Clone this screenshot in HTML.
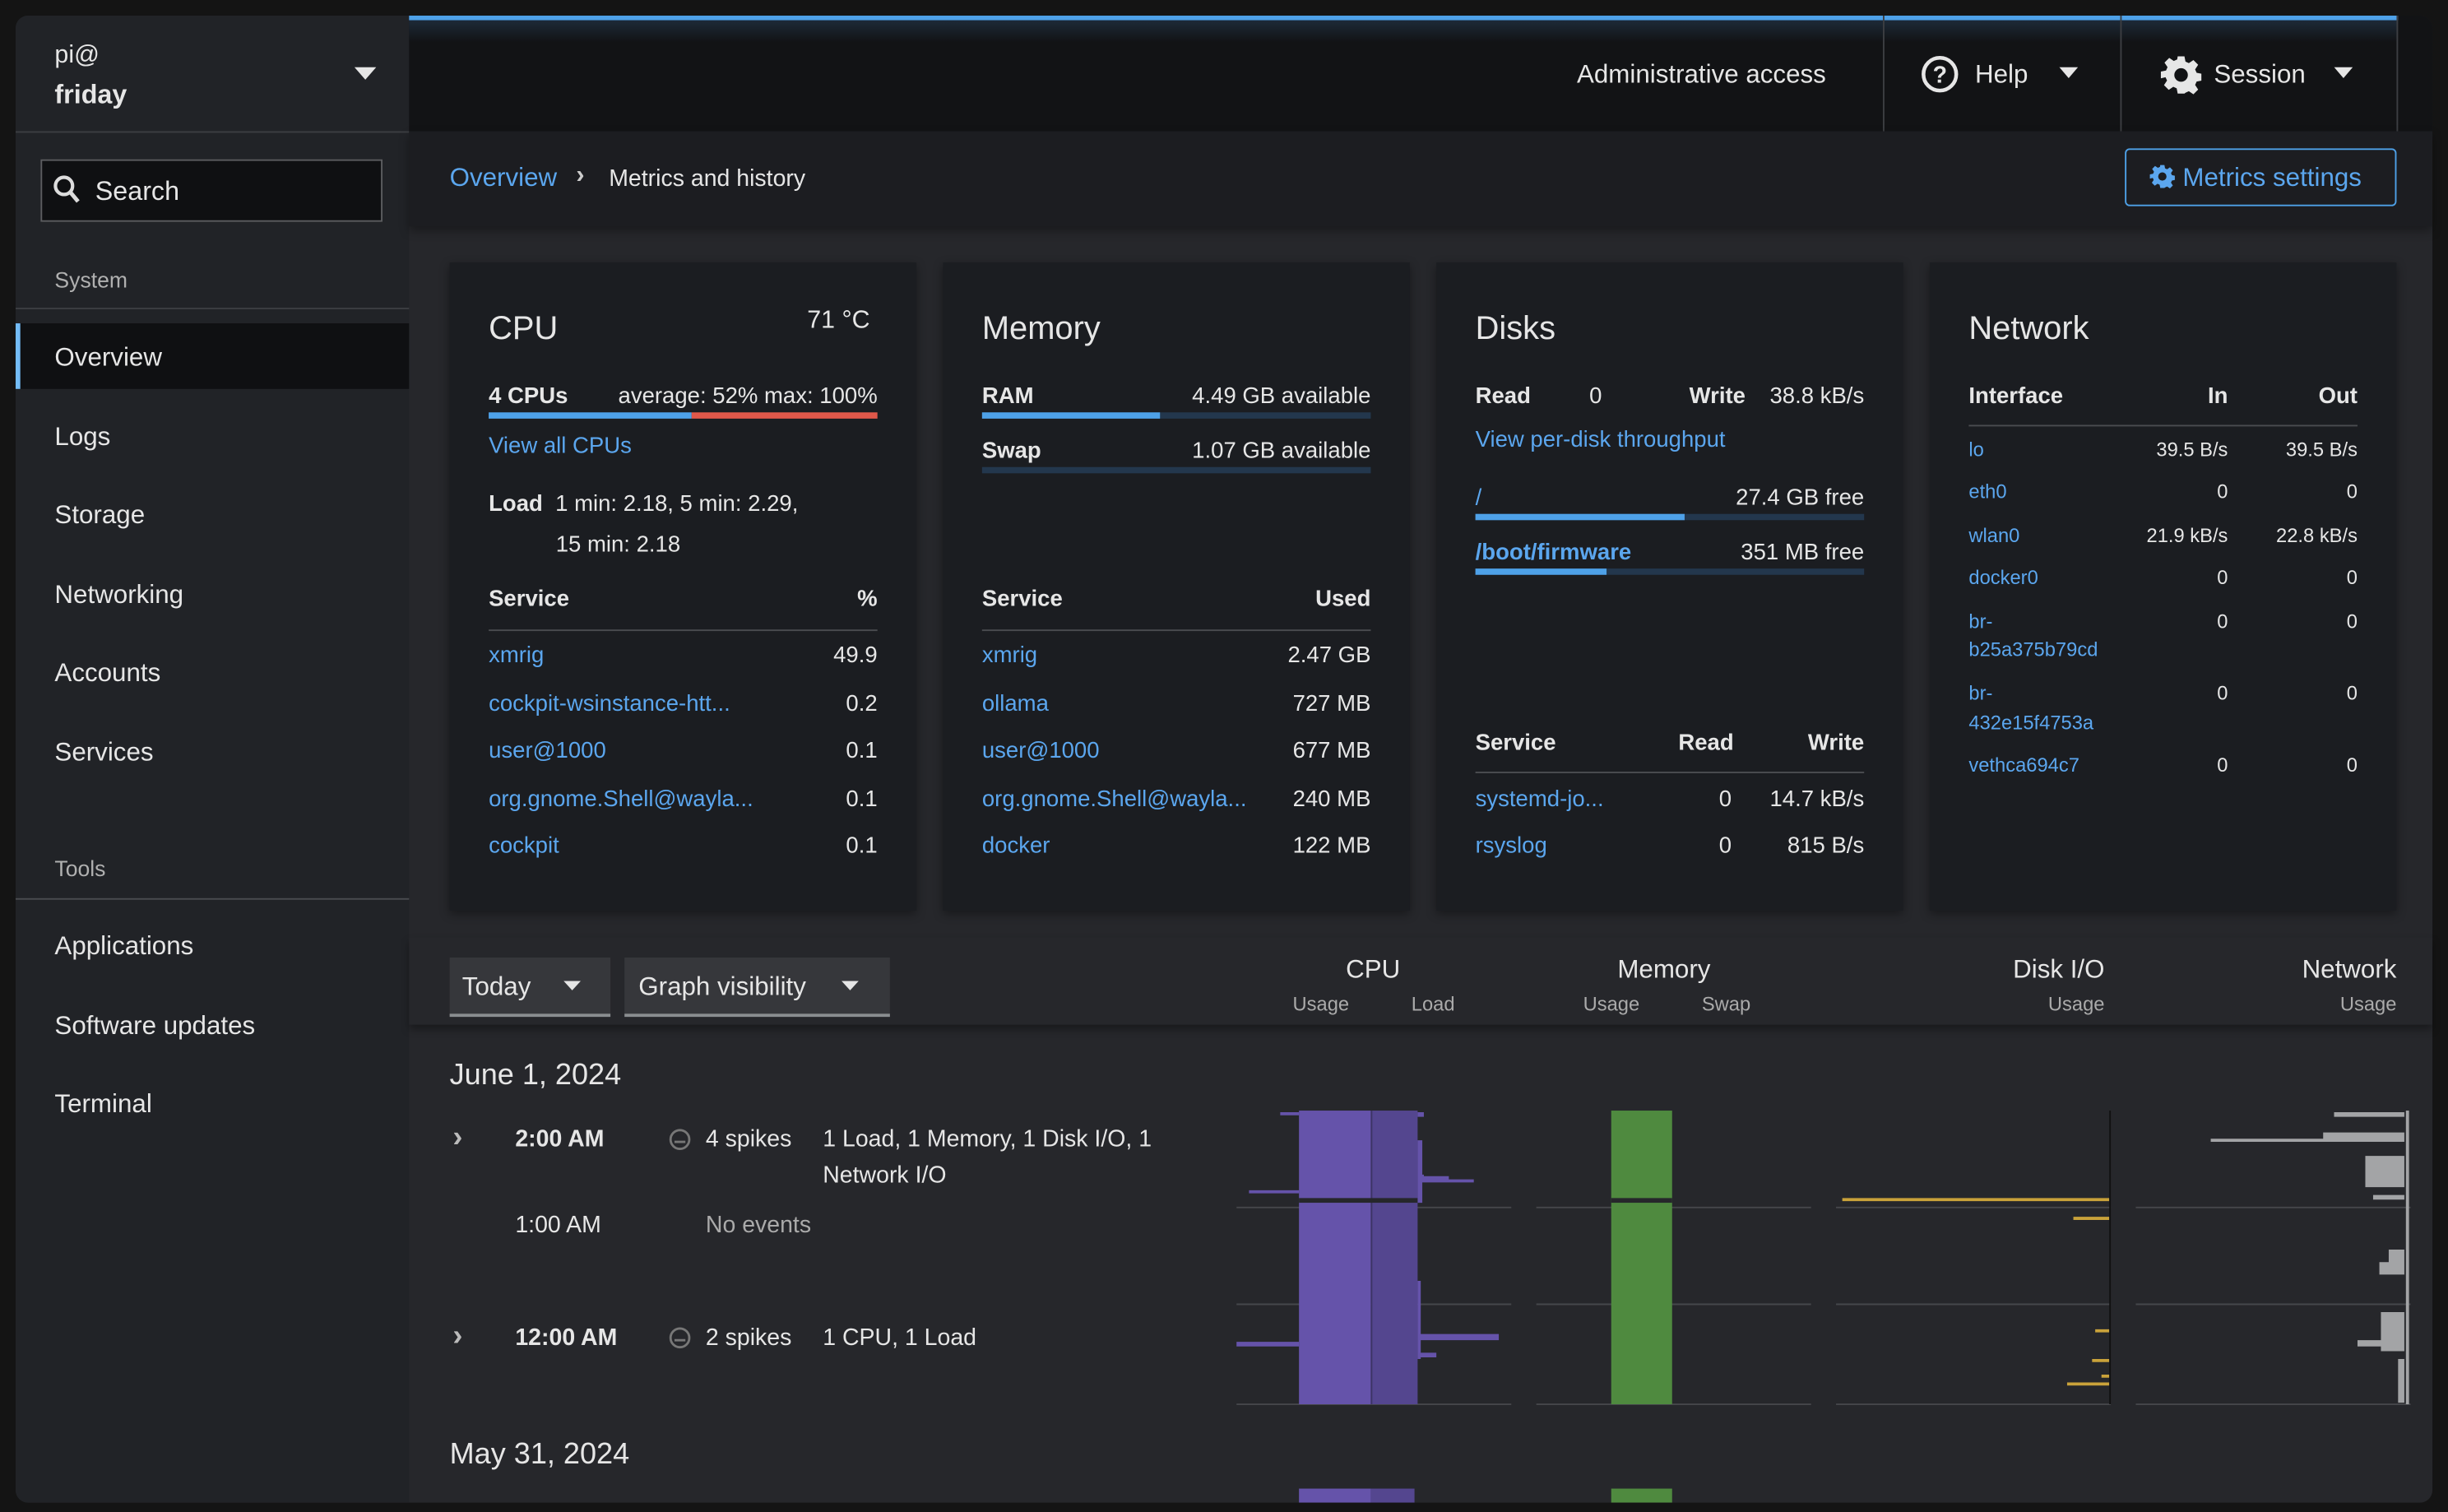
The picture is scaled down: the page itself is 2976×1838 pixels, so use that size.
<!DOCTYPE html>
<html><head><meta charset="utf-8">
<style>
html,body{margin:0;padding:0;background:#121212;overflow:hidden}
body{width:2976px;height:1838px}
#s{position:absolute;left:0;top:0;width:1568px;height:968px;transform:scale(1.898,1.8988);transform-origin:0 0;font-family:"Liberation Sans",sans-serif;color:#e6e6e6;background:#141414}
.a{position:absolute}
.t{position:absolute;white-space:nowrap;line-height:1;margin-top:1px}
.l{color:#5ba6ee}
.b{font-weight:bold}
.r{text-align:right}
.hr{position:absolute;height:1px;background:#4a4c50}
</style></head><body><div id="s">
<div class="a" style="left:10px;top:10px;width:1548px;height:952px;background:#26272b;border-radius:8px;overflow:hidden"></div>
<div class="a" style="left:10px;top:10px;width:252px;height:952px;background:#212327;border-radius:8px 0 0 8px"></div>
<div class="t" style="left:35px;top:27px;font-size:16px">pi@</div>
<div class="t b" style="left:35px;top:51px;font-size:17px">friday</div>
<svg class="a" style="left:227px;top:43px" width="14" height="9"><path d="M0 0H14L7 8Z" fill="#e6e6e6"/></svg>
<div class="hr" style="left:10px;top:84px;width:252px;background:#3c3e42"></div>
<div class="a" style="left:26px;top:102px;width:217px;height:38px;background:#0f1012;border:1px solid #5c5d60"></div>
<svg class="a" style="left:34px;top:112px" width="18" height="19"><circle cx="7" cy="7" r="5.5" fill="none" stroke="#ddd" stroke-width="2.2"/><path d="M11 11L16 17" stroke="#ddd" stroke-width="2.6"/></svg>
<div class="t" style="left:61px;top:113px;font-size:17px">Search</div>
<div class="t" style="left:35px;top:171px;font-size:14px;color:#b0b0b0">System</div>
<div class="hr" style="left:10px;top:197px;width:252px;background:#3c3e42"></div>
<div class="a" style="left:10px;top:207px;width:252px;height:42px;background:#0f1012"></div>
<div class="a" style="left:10px;top:207px;width:3px;height:42px;background:#73bcf7"></div>
<div class="t" style="left:35px;top:220px;font-size:16.5px">Overview</div>
<div class="t" style="left:35px;top:271px;font-size:16.5px">Logs</div>
<div class="t" style="left:35px;top:321px;font-size:16.5px">Storage</div>
<div class="t" style="left:35px;top:372px;font-size:16.5px">Networking</div>
<div class="t" style="left:35px;top:422px;font-size:16.5px">Accounts</div>
<div class="t" style="left:35px;top:473px;font-size:16.5px">Services</div>
<div class="t" style="left:35px;top:548px;font-size:14px;color:#b0b0b0">Tools</div>
<div class="hr" style="left:10px;top:575px;width:252px;background:#4a4c50"></div>
<div class="t" style="left:35px;top:597px;font-size:16.5px">Applications</div>
<div class="t" style="left:35px;top:648px;font-size:16.5px">Software updates</div>
<div class="t" style="left:35px;top:698px;font-size:16.5px">Terminal</div>
<div class="a" style="left:262px;top:10px;width:1296px;height:74px;background:#121315;border-radius:0 8px 0 0"></div>
<div class="a" style="left:262px;top:10px;width:1274px;height:3px;background:#4ea1e8"></div>
<div class="a" style="left:262px;top:13px;width:1274px;height:14px;background:linear-gradient(#1d2a38,#121315)"></div>
<div class="a" style="left:1206px;top:10px;width:1px;height:74px;background:#3c3e42"></div>
<div class="a" style="left:1358px;top:10px;width:1px;height:74px;background:#3c3e42"></div>
<div class="a" style="left:1535px;top:10px;width:1px;height:74px;background:#3c3e42"></div>
<div class="t" style="left:1010px;top:39px;font-size:16.5px">Administrative access</div>
<svg class="a" style="left:1230px;top:35px" width="25" height="25"><circle cx="12.5" cy="12.5" r="10.5" fill="none" stroke="#e6e6e6" stroke-width="2.4"/><text x="12.5" y="18" text-anchor="middle" font-size="15" font-weight="bold" fill="#e6e6e6" font-family="Liberation Sans">?</text></svg>
<div class="t" style="left:1265px;top:39px;font-size:16.5px">Help</div>
<svg class="a" style="left:1319px;top:43px" width="12" height="8"><path d="M0 0H12L6 7Z" fill="#e6e6e6"/></svg>
<svg class="a" style="left:1384px;top:35px" width="26" height="26" viewBox="0 0 24 24"><path fill="#e6e6e6" d="M10 1h4l.6 3.1 2 .9 2.7-1.8 2.8 2.8-1.8 2.7.9 2 3.1.6v4l-3.1.6-.9 2 1.8 2.7-2.8 2.8-2.7-1.8-2 .9L14 23h-4l-.6-3.1-2-.9-2.700 1.8-2.8-2.8 1.8-2.7-.9-2L0 14v-4l3.1-.6.9-2L2.2 4.7 5 1.9l2.7 1.8 2-.9zM12 8a4 4 0 100 8 4 4 0 000-8z"/></svg>
<div class="t" style="left:1418px;top:39px;font-size:16.5px">Session</div>
<svg class="a" style="left:1495px;top:43px" width="12" height="8"><path d="M0 0H12L6 7Z" fill="#e6e6e6"/></svg>
<div class="a" style="left:262px;top:84px;width:1296px;height:61px;background:#1c1d21;box-shadow:0 3px 6px rgba(0,0,0,.35)"></div>
<div class="t l" style="left:288px;top:105px;font-size:16.5px">Overview</div>
<div class="t b" style="left:369px;top:104px;font-size:16px;color:#ccc">›</div>
<div class="t" style="left:390px;top:106px;font-size:15px">Metrics and history</div>
<div class="a" style="left:1361px;top:95px;width:172px;height:35px;border:1px solid #4ea1e8;border-radius:3px"></div>
<svg class="a" style="left:1377px;top:105px" width="16" height="16" viewBox="0 0 24 24"><path fill="#5ba6ee" d="M10 1h4l.6 3.1 2 .9 2.7-1.8 2.8 2.8-1.8 2.7.9 2 3.1.6v4l-3.1.6-.9 2 1.8 2.7-2.8 2.8-2.7-1.8-2 .9L14 23h-4l-.6-3.1-2-.9-2.7 1.8-2.8-2.8 1.8-2.7-.9-2L0 14v-4l3.1-.6.9-2L2.2 4.7 5 1.9l2.7 1.8 2-.9zM12 8a4 4 0 100 8 4 4 0 000-8z"/></svg>
<div class="t l" style="left:1398px;top:105px;font-size:16.5px">Metrics settings</div>
<div class="a" style="left:288px;top:168px;width:299px;height:415px;background:#1b1d21;box-shadow:0 2px 6px rgba(0,0,0,.4)"></div>
<div class="a" style="left:604px;top:168px;width:299px;height:415px;background:#1b1d21;box-shadow:0 2px 6px rgba(0,0,0,.4)"></div>
<div class="a" style="left:920px;top:168px;width:299px;height:415px;background:#1b1d21;box-shadow:0 2px 6px rgba(0,0,0,.4)"></div>
<div class="a" style="left:1236px;top:168px;width:299px;height:415px;background:#1b1d21;box-shadow:0 2px 6px rgba(0,0,0,.4)"></div>
<div class="t" style="left:313px;top:199px;font-size:21px">CPU</div>
<div class="t" style="left:517px;top:197px;font-size:16px">71 °C</div>
<div class="t b" style="left:313px;top:246px;font-size:14.5px">4 CPUs</div>
<div class="t r" style="right:1006px;top:246px;font-size:14.5px">average: 52% max: 100%</div>
<div class="a" style="left:313px;top:264px;width:130px;height:4px;background:#4ea1e8"></div>
<div class="a" style="left:443px;top:264px;width:119px;height:4px;background:#e0584a"></div>
<div class="t l" style="left:313px;top:278px;font-size:14.5px">View all CPUs</div>
<div class="t" style="left:313px;top:315px;font-size:14.5px"><b>Load</b>&nbsp; 1 min: 2.18, 5 min: 2.29,</div>
<div class="t" style="left:356px;top:341px;font-size:14.5px">15 min: 2.18</div>
<div class="t b" style="left:313px;top:376px;font-size:14.5px">Service</div>
<div class="t b r" style="right:1006px;top:376px;font-size:14.5px">%</div>
<div class="hr" style="left:313px;top:403px;width:249px"></div>
<div class="t l" style="left:313px;top:412px;font-size:14.5px">xmrig</div><div class="t r" style="right:1006px;top:412px;font-size:14.5px">49.9</div>
<div class="t l" style="left:313px;top:443px;font-size:14.5px">cockpit-wsinstance-htt...</div><div class="t r" style="right:1006px;top:443px;font-size:14.5px">0.2</div>
<div class="t l" style="left:313px;top:473px;font-size:14.5px">user@1000</div><div class="t r" style="right:1006px;top:473px;font-size:14.5px">0.1</div>
<div class="t l" style="left:313px;top:504px;font-size:14.5px">org.gnome.Shell@wayla...</div><div class="t r" style="right:1006px;top:504px;font-size:14.5px">0.1</div>
<div class="t l" style="left:313px;top:534px;font-size:14.5px">cockpit</div><div class="t r" style="right:1006px;top:534px;font-size:14.5px">0.1</div>
<div class="t" style="left:629px;top:199px;font-size:21px">Memory</div>
<div class="t b" style="left:629px;top:246px;font-size:14.5px">RAM</div>
<div class="t r" style="right:690px;top:246px;font-size:14.5px">4.49 GB available</div>
<div class="a" style="left:629px;top:264px;width:249px;height:4px;background:#23374d"></div>
<div class="a" style="left:629px;top:264px;width:114px;height:4px;background:#4ea1e8"></div>
<div class="t b" style="left:629px;top:281px;font-size:14.5px">Swap</div>
<div class="t r" style="right:690px;top:281px;font-size:14.5px">1.07 GB available</div>
<div class="a" style="left:629px;top:299px;width:249px;height:4px;background:#23374d"></div>
<div class="t b" style="left:629px;top:376px;font-size:14.5px">Service</div>
<div class="t b r" style="right:690px;top:376px;font-size:14.5px">Used</div>
<div class="hr" style="left:629px;top:403px;width:249px"></div>
<div class="t l" style="left:629px;top:412px;font-size:14.5px">xmrig</div><div class="t r" style="right:690px;top:412px;font-size:14.5px">2.47 GB</div>
<div class="t l" style="left:629px;top:443px;font-size:14.5px">ollama</div><div class="t r" style="right:690px;top:443px;font-size:14.5px">727 MB</div>
<div class="t l" style="left:629px;top:473px;font-size:14.5px">user@1000</div><div class="t r" style="right:690px;top:473px;font-size:14.5px">677 MB</div>
<div class="t l" style="left:629px;top:504px;font-size:14.5px">org.gnome.Shell@wayla...</div><div class="t r" style="right:690px;top:504px;font-size:14.5px">240 MB</div>
<div class="t l" style="left:629px;top:534px;font-size:14.5px">docker</div><div class="t r" style="right:690px;top:534px;font-size:14.5px">122 MB</div>
<div class="t" style="left:945px;top:199px;font-size:21px">Disks</div>
<div class="t b" style="left:945px;top:246px;font-size:14.5px">Read</div>
<div class="t" style="left:1018px;top:246px;font-size:14.5px">0</div>
<div class="t b" style="left:1082px;top:246px;font-size:14.5px">Write</div>
<div class="t r" style="right:374px;top:246px;font-size:14.5px">38.8 kB/s</div>
<div class="t l" style="left:945px;top:274px;font-size:14.5px">View per-disk throughput</div>
<div class="t l" style="left:945px;top:311px;font-size:14.5px">/</div>
<div class="t r" style="right:374px;top:311px;font-size:14.5px">27.4 GB free</div>
<div class="a" style="left:945px;top:329px;width:249px;height:4px;background:#23374d"></div>
<div class="a" style="left:945px;top:329px;width:134px;height:4px;background:#4ea1e8"></div>
<div class="t l b" style="left:945px;top:346px;font-size:14.5px">/boot/firmware</div>
<div class="t r" style="right:374px;top:346px;font-size:14.5px">351 MB free</div>
<div class="a" style="left:945px;top:364px;width:249px;height:4px;background:#23374d"></div>
<div class="a" style="left:945px;top:364px;width:84px;height:4px;background:#4ea1e8"></div>
<div class="t b" style="left:945px;top:468px;font-size:14.5px">Service</div>
<div class="t b" style="left:1075px;top:468px;font-size:14.5px">Read</div>
<div class="t b r" style="right:374px;top:468px;font-size:14.5px">Write</div>
<div class="hr" style="left:945px;top:494px;width:249px"></div>
<div class="t l" style="left:945px;top:504px;font-size:14.5px">systemd-jo...</div><div class="t" style="left:1101px;top:504px;font-size:14.5px">0</div><div class="t r" style="right:374px;top:504px;font-size:14.5px">14.7 kB/s</div>
<div class="t l" style="left:945px;top:534px;font-size:14.5px">rsyslog</div><div class="t" style="left:1101px;top:534px;font-size:14.5px">0</div><div class="t r" style="right:374px;top:534px;font-size:14.5px">815 B/s</div>
<div class="t" style="left:1261px;top:199px;font-size:21px">Network</div>
<div class="t b" style="left:1261px;top:246px;font-size:14.5px">Interface</div>
<div class="t b r" style="right:141px;top:246px;font-size:14.5px">In</div>
<div class="t b r" style="right:58px;top:246px;font-size:14.5px">Out</div>
<div class="hr" style="left:1261px;top:272px;width:249px"></div>
<div style="font-size:12.5px">
<div class="t l" style="left:1261px;top:281px">lo</div><div class="t r" style="right:141px;top:281px">39.5 B/s</div><div class="t r" style="right:58px;top:281px">39.5 B/s</div>
<div class="t l" style="left:1261px;top:308px">eth0</div><div class="t r" style="right:141px;top:308px">0</div><div class="t r" style="right:58px;top:308px">0</div>
<div class="t l" style="left:1261px;top:336px">wlan0</div><div class="t r" style="right:141px;top:336px">21.9 kB/s</div><div class="t r" style="right:58px;top:336px">22.8 kB/s</div>
<div class="t l" style="left:1261px;top:363px">docker0</div><div class="t r" style="right:141px;top:363px">0</div><div class="t r" style="right:58px;top:363px">0</div>
<div class="t l" style="left:1261px;top:391px">br-</div><div class="t r" style="right:141px;top:391px">0</div><div class="t r" style="right:58px;top:391px">0</div>
<div class="t l" style="left:1261px;top:409px">b25a375b79cd</div>
<div class="t l" style="left:1261px;top:437px">br-</div><div class="t r" style="right:141px;top:437px">0</div><div class="t r" style="right:58px;top:437px">0</div>
<div class="t l" style="left:1261px;top:456px">432e15f4753a</div>
<div class="t l" style="left:1261px;top:483px">vethca694c7</div><div class="t r" style="right:141px;top:483px">0</div><div class="t r" style="right:58px;top:483px">0</div>
</div>
<div class="a" style="left:262px;top:600px;width:1296px;height:56px;background:#26272b;box-shadow:0 3px 5px rgba(0,0,0,.35)"></div>
<div class="a" style="left:288px;top:613px;width:103px;height:36px;background:#36373b;border-bottom:2px solid #8a8d90"></div>
<div class="t" style="left:296px;top:623px;font-size:16.5px">Today</div>
<svg class="a" style="left:361px;top:628px" width="11" height="7"><path d="M0 0H11L5.5 6Z" fill="#e6e6e6"/></svg>
<div class="a" style="left:400px;top:613px;width:170px;height:36px;background:#36373b;border-bottom:2px solid #8a8d90"></div>
<div class="t" style="left:409px;top:623px;font-size:16.5px">Graph visibility</div>
<svg class="a" style="left:539px;top:628px" width="11" height="7"><path d="M0 0H11L5.5 6Z" fill="#e6e6e6"/></svg>
<div class="t" style="left:862px;top:612px;font-size:16.5px">CPU</div>
<div class="t" style="left:828px;top:636px;font-size:12.5px;color:#aaa">Usage</div>
<div class="t" style="left:904px;top:636px;font-size:12.5px;color:#aaa">Load</div>
<div class="t" style="left:1036px;top:612px;font-size:16.5px">Memory</div>
<div class="t" style="left:1014px;top:636px;font-size:12.5px;color:#aaa">Usage</div>
<div class="t" style="left:1090px;top:636px;font-size:12.5px;color:#aaa">Swap</div>
<div class="t r" style="right:220px;top:612px;font-size:16.5px">Disk I/O</div>
<div class="t r" style="right:220px;top:636px;font-size:12.5px;color:#aaa">Usage</div>
<div class="t r" style="right:33px;top:612px;font-size:16.5px">Network</div>
<div class="t r" style="right:33px;top:636px;font-size:12.5px;color:#aaa">Usage</div>
<div class="t" style="left:288px;top:678px;font-size:19px">June 1, 2024</div>
<div class="t b" style="left:290px;top:718px;font-size:19px;color:#bbb">›</div>
<div class="t b" style="left:330px;top:721px;font-size:15px">2:00 AM</div>
<svg class="a" style="left:428px;top:722px" width="15" height="15"><circle cx="7.5" cy="7.5" r="6" fill="none" stroke="#777" stroke-width="1.5"/><path d="M4 9H11" stroke="#777" stroke-width="1.5"/></svg>
<div class="t" style="left:452px;top:721px;font-size:15px">4 spikes</div>
<div class="t" style="left:527px;top:721px;font-size:15px">1 Load, 1 Memory, 1 Disk I/O, 1</div>
<div class="t" style="left:527px;top:744px;font-size:15px">Network I/O</div>
<div class="t" style="left:330px;top:776px;font-size:15px">1:00 AM</div>
<div class="t" style="left:452px;top:776px;font-size:15px;color:#aaa">No events</div>
<div class="t b" style="left:290px;top:845px;font-size:19px;color:#bbb">›</div>
<div class="t b" style="left:330px;top:848px;font-size:15px">12:00 AM</div>
<svg class="a" style="left:428px;top:849px" width="15" height="15"><circle cx="7.5" cy="7.5" r="6" fill="none" stroke="#777" stroke-width="1.5"/><path d="M4 9H11" stroke="#777" stroke-width="1.5"/></svg>
<div class="t" style="left:452px;top:848px;font-size:15px">2 spikes</div>
<div class="t" style="left:527px;top:848px;font-size:15px">1 CPU, 1 Load</div>
<div class="t" style="left:288px;top:921px;font-size:19px">May 31, 2024</div>
<svg class="a" style="left:780px;top:700px" width="778" height="262">
<g stroke="#45474b" stroke-width="1">
<path d="M12 73H188M204 73H380M396 73H572M588 73H764"/>
<path d="M12 135H188M204 135H380M396 135H572M588 135H764"/>
<path d="M12 199H188M204 199H380M396 199H572M588 199H764"/>
</g>
<rect x="52" y="11" width="46" height="188" fill="#6553aa"/>
<rect x="98" y="11" width="30" height="188" fill="#54468f"/>
<rect x="98" y="11" width="1" height="188" fill="#3d3466"/>
<path d="M40 12H52v2H40zM128 12h4v3h-4zM128 30h3v40h-3zM128 52h4v3h-4zM20 62h32v2H20zM128 53h20v2h-20zM128 55h36v2h-36zM128 120h2v50h-2zM12 159h40v3H12zM128 154h52v4h-52zM128 166h12v3h-12z" fill="#6553aa"/>
<rect x="52" y="67" width="76" height="3" fill="#26272b"/>
<rect x="252" y="11" width="39" height="188" fill="#4f8a3f"/>
<rect x="252" y="67" width="39" height="3" fill="#26272b"/>
<path d="M400 67H571v2H400zM548 79h23v2h-23zM562 151h9v2h-9zM560 170h11v2h-11zM544 185h27v2h-27zM566 180h5v2h-5z" fill="#c9a23a"/>
<rect x="571" y="11" width="1" height="188" fill="#111"/>
<path d="M636 29H760v2H636zM708 25h52v4h-52zM715 12h45v3h-45zM735 40h25v20h-25zM746 55h14v5h-14zM740 65h20v3h-20zM750 100h10v14h-10zM744 108h16v8h-16zM745 140h15v25h-15zM730 158h30v4h-30zM756 170h4v28h-4z" fill="#a3a4a6"/>
<rect x="761" y="11" width="2" height="188" fill="#a3a4a6"/>
<rect x="52" y="253" width="46" height="9" fill="#6553aa"/>
<rect x="98" y="253" width="28" height="9" fill="#54468f"/>
<rect x="252" y="253" width="39" height="9" fill="#4f8a3f"/>
</svg>
</div></body></html>
